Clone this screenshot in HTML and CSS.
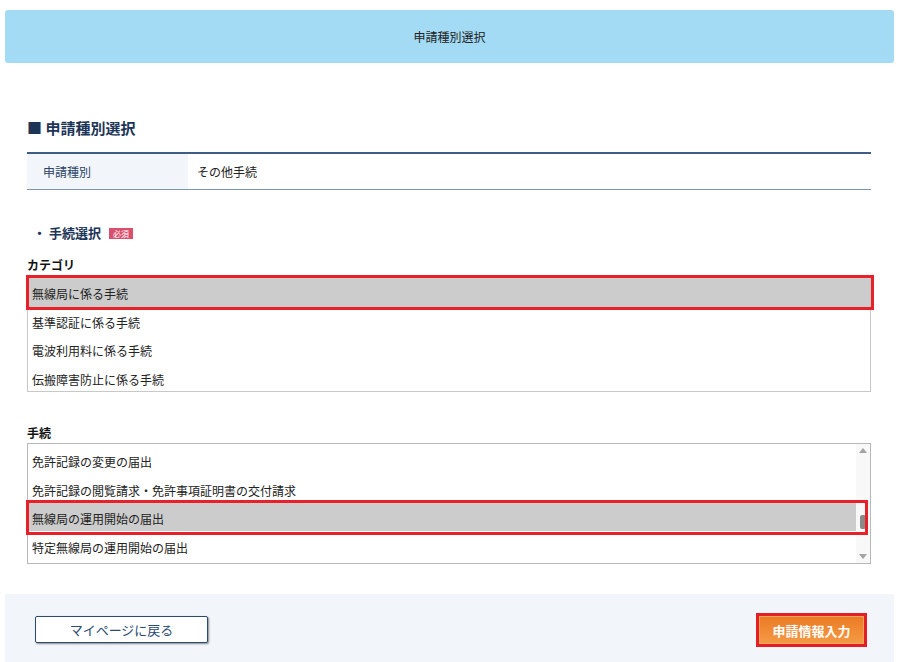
FILE: index.html
```html
<!DOCTYPE html>
<html lang="ja">
<head>
    <meta charset="UTF-8">
    <meta name="viewport" content="width=device-width, initial-scale=1.0">
    <title>申請種別選択</title>
    <link rel="stylesheet" href="styles.css">
</head>
<body>
    <div class="page">
        <div class="header">申請種別選択</div>

        <div class="content">
            <h2 class="section-title">■ 申請種別選択</h2>

            <div class="info-table">
                <div class="info-label">申請種別</div>
                <div class="info-value">その他手続</div>
            </div>

            <h3 class="sub-title">・ 手続選択 <span class="badge">必須</span></h3>

            <div class="field-label">カテゴリ</div>
            <div class="listbox category">
                <div class="list-items">
                    <div class="item selected">無線局に係る手続</div>
                    <div class="item">基準認証に係る手続</div>
                    <div class="item">電波利用料に係る手続</div>
                    <div class="item">伝搬障害防止に係る手続</div>
                </div>
                <div class="mark mark-category"></div>
            </div>

            <div class="field-label second">手続</div>
            <div class="listbox procedure">
                <div class="list-items">
                    <div class="item">免許記録の変更の届出</div>
                    <div class="item">免許記録の閲覧請求・免許事項証明書の交付請求</div>
                    <div class="item selected">無線局の運用開始の届出</div>
                    <div class="item">特定無線局の運用開始の届出</div>
                </div>
                <div class="scrollbar">
                    <span class="arrow up"></span>
                    <span class="thumb"></span>
                    <span class="arrow down"></span>
                </div>
                <div class="mark mark-procedure"></div>
            </div>
        </div>

        <div class="footer">
            <button class="back-btn">マイページに戻る</button>
            <div class="next-frame">
                <button class="next-btn">申請情報入力</button>
            </div>
        </div>
    </div>
</body>
</html>
```

FILE: styles.css
```css
body {
    margin: 0;
    padding: 0;
    background: #ffffff;
    font-family: "Noto Sans CJK JP", "Noto Sans", sans-serif;
    color: #222222;
    overflow: hidden;
}

.page {
    margin: 0 6px 0 5px;
}

.header {
    margin-top: 10px;
    height: 53px;
    background-color: #a3dbf5;
    border-radius: 3px;
    display: flex;
    justify-content: center;
    align-items: center;
    font-size: 12px;
    color: #222222;
}

.content {
    padding: 55px 23px 0 22px;
}

.section-title {
    margin: 0 0 14px 0;
    font-size: 15px;
    line-height: 20px;
    font-weight: bold;
    color: #1d3557;
}

.info-table {
    display: flex;
    height: 35px;
    border-top: 2px solid #3d5d84;
    border-bottom: 1px solid #8095ad;
    font-size: 12px;
}

.info-label {
    width: 145px;
    padding-left: 16px;
    background-color: #f2f5f9;
    color: #2a4366;
    display: flex;
    align-items: center;
}

.info-value {
    padding-left: 9px;
    display: flex;
    align-items: center;
}

.sub-title {
    margin: 33px 0 0 6px;
    font-size: 13px;
    line-height: 20px;
    font-weight: bold;
    color: #1d3557;
    display: flex;
    align-items: center;
}

.badge {
    margin-left: 8px;
    padding: 0 4px;
    height: 11px;
    line-height: 11px;
    font-size: 8px;
    font-weight: normal;
    color: #ffffff;
    background-color: #d9506e;
}

.field-label {
    margin-top: 13px;
    font-size: 12px;
    line-height: 18px;
    font-weight: bold;
    color: #111111;
}

.field-label.second {
    margin-top: 32px;
}

.listbox {
    position: relative;
    margin-top: 2px;
    border: 1px solid #b8b8b8;
    display: flex;
}

.listbox.category {
    height: 114px;
    border-color: #c8c8c8;
}

.listbox.procedure {
    margin-top: 1px;
    height: 119px;
}

.list-items {
    flex: 1;
    padding-top: 1px;
    overflow: hidden;
}

.item {
    box-sizing: border-box;
    height: 28.7px;
    line-height: 29px;
    padding-top: 1px;
    padding-left: 4px;
    font-size: 12px;
    color: #222222;
    white-space: nowrap;
}

.procedure .item {
    padding-top: 3px;
    line-height: 28px;
}

.item.selected {
    background-color: #cccccc;
}

.scrollbar {
    width: 14px;
    background-color: #f8f8f8;
    display: flex;
    flex-direction: column;
    align-items: center;
}

.arrow {
    width: 0;
    height: 0;
    border-left: 4px solid transparent;
    border-right: 4px solid transparent;
}

.arrow.up {
    margin-top: 4px;
    border-bottom: 5px solid #a3a3a3;
}

.arrow.down {
    margin-top: auto;
    margin-bottom: 4px;
    border-top: 5px solid #a3a3a3;
}

.thumb {
    margin-top: 62px;
    width: 6px;
    height: 14px;
    border-radius: 2px;
    background-color: #8a8a8a;
}

/* red annotation frames */
.mark {
    position: absolute;
    border: 3px solid #e8202a;
    pointer-events: none;
}

.mark-category {
    top: -2px;
    left: -2px;
    right: -4px;
    height: 29px;
}

.mark-procedure {
    top: 56px;
    left: -2px;
    right: 2px;
    height: 29px;
}

.footer {
    margin-top: 30px;
    height: 80px;
    background-color: #f2f6fa;
    display: flex;
    justify-content: space-between;
    align-items: flex-start;
    padding: 19px 27px 0 30px;
}

.back-btn {
    width: 173px;
    height: 27px;
    margin-top: 3px;
    background-color: #ffffff;
    border: 1px solid #2b4a72;
    border-radius: 2px;
    box-shadow: 1px 1px 2px rgba(0, 0, 0, 0.45);
    font-family: "Noto Sans CJK JP", sans-serif;
    font-size: 13px;
    color: #2b4a72;
    cursor: pointer;
}

.next-frame {
    border: 3px solid #e31e24;
}

.next-btn {
    display: block;
    width: 105px;
    height: 28px;
    border: 1px solid #f7a35e;
    background: linear-gradient(#ec7b25, #f59a45);
    font-family: "Noto Sans CJK JP", sans-serif;
    font-size: 13px;
    font-weight: bold;
    color: #ffffff;
    cursor: pointer;
}
```
